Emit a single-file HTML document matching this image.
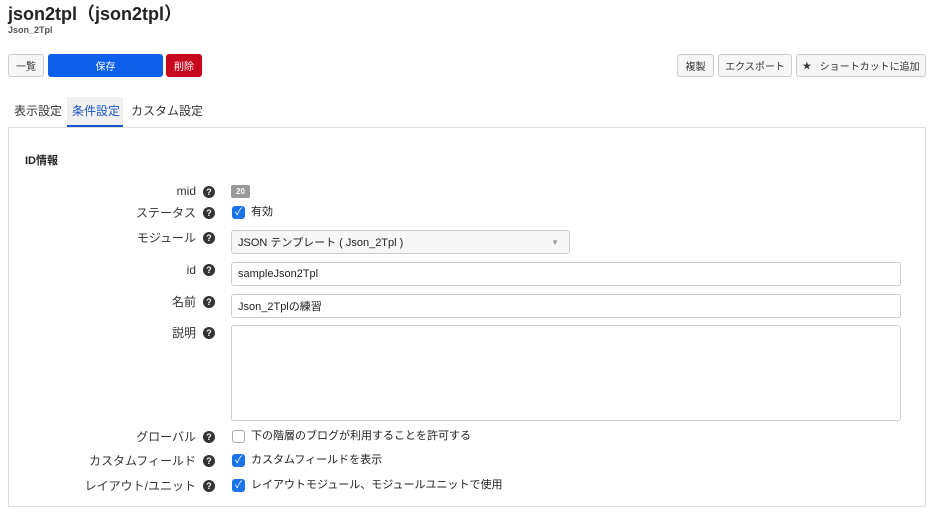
<!DOCTYPE html>
<html><head><meta charset="utf-8"><style>
*{box-sizing:border-box}
body{margin:0;width:940px;height:502px;overflow:hidden;background:#fff;font-family:"Liberation Sans","Noto Sans CJK JP",sans-serif;color:#333;position:relative}
.a{position:absolute}
h1{position:absolute;left:8px;top:2px;margin:0;font-size:18px;line-height:24px;font-weight:bold;color:#222}
.sub{left:8px;top:25px;font-size:9px;font-weight:bold;color:#555}
.btn{position:absolute;height:23px;border:1px solid #ccc;border-radius:3px;background:#f6f6f6;font-size:10px;color:#333;display:flex;align-items:center;justify-content:center;white-space:nowrap}
.tab{position:absolute;top:97px;height:30px;font-size:12px;line-height:28px;padding:0 6px;color:#333;white-space:nowrap}
.panel{left:8px;top:127px;width:918px;height:380px;border:1px solid #ddd;background:#fff}
.lbl{position:absolute;right:744px;font-size:12px;line-height:14px;color:#333;text-align:right;white-space:nowrap}
.q{position:absolute;left:203px;width:12px;height:12px;border-radius:50%;background:#333;color:#fff;font-size:9px;font-weight:bold;text-align:center;line-height:12px}
.inp{position:absolute;left:231px;border:1px solid #ccc;border-radius:3px;background:#fff;font-size:11px;padding-left:6px;display:flex;align-items:center;color:#222}
.cb{position:absolute;left:232px;width:13px;height:13px;border-radius:3px;background:#1a73e8;color:#fff;font-size:10px;line-height:13px;text-align:center}
.cbt{position:absolute;left:251px;font-size:11px;line-height:13px;color:#222}
</style></head><body>
<h1>json2tpl（json2tpl）</h1>
<div class="a sub">Json_2Tpl</div>
<div class="btn" style="left:8px;top:54px;width:36px">一覧</div>
<div class="btn" style="left:48px;top:54px;width:115px;background:#0b5fe8;border-color:#0b5fe8;color:#fff">保存</div>
<div class="btn" style="left:166px;top:54px;width:36px;background:#c8091d;border-color:#c8091d;color:#fff">削除</div>
<div class="btn" style="left:677px;top:54px;width:37px">複製</div>
<div class="btn" style="left:718px;top:54px;width:74px">エクスポート</div>
<div class="btn" style="left:796px;top:54px;width:130px"><span style="font-size:9px">★</span>&nbsp;&nbsp;&nbsp;ショートカットに追加</div>
<div class="tab" style="left:8px">表示設定</div>
<div class="tab" style="left:67px;width:56px;background:#f0f0f0;color:#1a56c8;border-bottom:2px solid #1a56c8;padding:0 5px">条件設定</div>
<div class="tab" style="left:125px">カスタム設定</div>
<div class="a panel"></div>
<div class="a" style="left:25px;top:152px;font-size:11px;font-weight:bold;color:#222">ID情報</div>

<div class="lbl" style="top:184px">mid</div><div class="q" style="top:186px">?</div>
<div class="a" style="left:231px;top:185px;width:19px;height:13px;background:#999;border-radius:2px;color:#fff;font-size:8px;font-weight:bold;text-align:center;line-height:13px">20</div>

<div class="lbl" style="top:206px">ステータス</div><div class="q" style="top:207px">?</div>
<div class="cb" style="top:206px">✓</div><div class="cbt" style="top:206px">有効</div>

<div class="lbl" style="top:231px">モジュール</div><div class="q" style="top:232px">?</div>
<div class="inp" style="top:230px;width:339px;height:24px;background:#f7f7f7">JSON テンプレート ( Json_2Tpl )<span style="position:absolute;right:10px;font-size:8px;color:#999">▼</span></div>

<div class="lbl" style="top:263px">id</div><div class="q" style="top:264px">?</div>
<div class="inp" style="top:262px;width:670px;height:24px">sampleJson2Tpl</div>

<div class="lbl" style="top:295px">名前</div><div class="q" style="top:296px">?</div>
<div class="inp" style="top:294px;width:670px;height:24px">Json_2Tplの練習</div>

<div class="lbl" style="top:326px">説明</div><div class="q" style="top:327px">?</div>
<div class="inp" style="top:325px;width:670px;height:96px"></div>

<div class="lbl" style="top:430px">グローバル</div><div class="q" style="top:431px">?</div>
<div class="cb" style="top:430px;background:#fff;border:1px solid #aaa"></div><div class="cbt" style="top:430px">下の階層のブログが利用することを許可する</div>

<div class="lbl" style="top:454px">カスタムフィールド</div><div class="q" style="top:455px">?</div>
<div class="cb" style="top:454px">✓</div><div class="cbt" style="top:454px">カスタムフィールドを表示</div>

<div class="lbl" style="top:479px">レイアウト/ユニット</div><div class="q" style="top:480px">?</div>
<div class="cb" style="top:479px">✓</div><div class="cbt" style="top:479px">レイアウトモジュール、モジュールユニットで使用</div>
</body></html>
